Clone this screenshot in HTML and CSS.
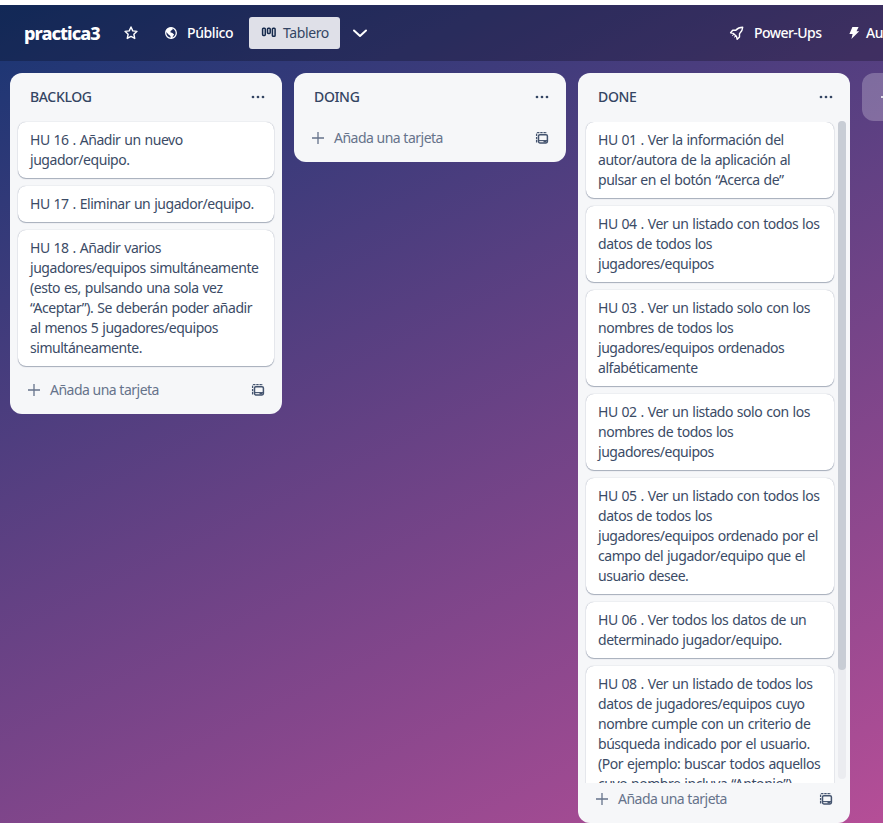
FILE: index.html
```html
<!DOCTYPE html>
<html lang="es">
<head>
<meta charset="utf-8">
<title>practica3</title>
<link rel="stylesheet" href="styles.css">
</head>
<body>
<svg width="0" height="0" class="defs">
  <symbol id="dots" viewBox="0 0 16 16"><g fill="currentColor"><circle cx="3" cy="8" r="1.35"/><circle cx="8" cy="8" r="1.35"/><circle cx="13" cy="8" r="1.35"/></g></symbol>
  <symbol id="plus" viewBox="0 0 16 16"><path d="M8 2v12M2 8h12" stroke="currentColor" stroke-width="1.3" fill="none"/></symbol>
  <symbol id="template" viewBox="0 0 16 16"><g fill="none" stroke="currentColor"><rect x="4.5" y="4.7" width="8.9" height="8.3" rx="1.4" stroke-width="1.5"/><path d="M4.5 10.6h8.5" stroke-width="1.1"/><path d="M9.5 11.5h3" stroke-width="1.8"/><path d="M2.6 12.5V3.9q0-1.3 1.3-1.3H13" stroke-width="1.3" stroke-dasharray="2.4 .8"/></g></symbol>
</svg>
<header class="bar">
  <h1 class="board-name">practica3</h1>
  <svg class="star" width="16" height="16" viewBox="0 0 16 16"><path d="M8 2l1.75 3.9 4.25.45-3.15 2.9.9 4.2L8 11.35l-3.75 2.1.9-4.2L2 6.35l4.25-.45z" fill="none" stroke="currentColor" stroke-width="1.4" stroke-linejoin="round"/></svg>
  <div class="item visibility">
    <svg width="14" height="14" viewBox="0 0 14 14"><circle cx="7" cy="7" r="5.3" fill="none" stroke="currentColor" stroke-width="1.3"/><path d="M1.5 5.2C2.4 3 4.3 1.5 7 1.4l1.8.4-.3 1.9-1.7 1.1-.5 1.5 2.1.8 1.7 1.5-1.2 1.6-.7 2.2-1.5.1-.3-2.5-1.9-1.5z" fill="currentColor"/></svg>
    <span>Público</span>
  </div>
  <div class="view">
    <svg width="16" height="14" viewBox="0 0 16 14"><g fill="none" stroke="currentColor" stroke-width="1.5"><rect x="1.6" y="2.2" width="2.7" height="7.2" rx=".8"/><rect x="6.5" y="2.2" width="2.7" height="5.2" rx=".8"/><rect x="11.4" y="2.2" width="2.7" height="8" rx=".8"/></g></svg>
    <span>Tablero</span>
  </div>
  <svg class="chevron" width="16" height="16" viewBox="0 0 16 16"><path d="M2 5.5l6 5.4 6-5.4" fill="none" stroke="currentColor" stroke-width="2" stroke-linecap="round" stroke-linejoin="round"/></svg>
  <div class="item powerups">
    <svg width="16" height="16" viewBox="0 0 16 16"><path d="M13.7 2.3c-3.3 0-5.2 1-6.9 3L3.7 5.2 1.6 7.7l2.8.7 3 2.9.8 3 2.3-2.4v-3.1c2-1.8 3.1-3.5 3.2-6.5z" fill="none" stroke="currentColor" stroke-width="1.4" stroke-linejoin="round"/><path d="M4.7 8.8l-1.2 2.1M7 11.2l-2 1" stroke="currentColor" stroke-width="1"/></svg>
    <span>Power-Ups</span>
  </div>
  <div class="item automation">
    <svg width="12" height="16" viewBox="0 0 12 16"><path d="M4.4 2h6.2L8.5 6.2h2.7L3.4 14l1.2-5H1.4z" fill="currentColor"/></svg>
    <span>Au</span>
  </div>
</header>
<main class="board">
  <section class="list">
    <div class="list-head"><h2>BACKLOG</h2><svg width="16" height="16"><use href="#dots"/></svg></div>
    <div class="cards">
      <article class="card">HU 16 . Añadir un nuevo<br>jugador/equipo.</article>
      <article class="card">HU 17 . Eliminar un jugador/equipo.</article>
      <article class="card">HU 18 . Añadir varios<br>jugadores/equipos simultáneamente<br>(esto es, pulsando una sola vez<br>“Aceptar”). Se deberán poder añadir<br>al menos 5 jugadores/equipos<br>simultáneamente.</article>
    </div>
    <div class="add"><svg width="16" height="16"><use href="#plus"/></svg><span>Añada una tarjeta</span><svg class="tpl" width="16" height="16"><use href="#template"/></svg></div>
  </section>
  <section class="list">
    <div class="list-head"><h2>DOING</h2><svg width="16" height="16"><use href="#dots"/></svg></div>
    <div class="add"><svg width="16" height="16"><use href="#plus"/></svg><span>Añada una tarjeta</span><svg class="tpl" width="16" height="16"><use href="#template"/></svg></div>
  </section>
  <section class="list full">
    <div class="list-head"><h2>DONE</h2><svg width="16" height="16"><use href="#dots"/></svg></div>
    <div class="cards">
      <article class="card">HU 01 . Ver la información del<br>autor/autora de la aplicación al<br>pulsar en el botón “Acerca de”</article>
      <article class="card">HU 04 . Ver un listado con todos los<br>datos de todos los<br>jugadores/equipos</article>
      <article class="card">HU 03 . Ver un listado solo con los<br>nombres de todos los<br>jugadores/equipos ordenados<br>alfabéticamente</article>
      <article class="card">HU 02 . Ver un listado solo con los<br>nombres de todos los<br>jugadores/equipos</article>
      <article class="card">HU 05 . Ver un listado con todos los<br>datos de todos los<br>jugadores/equipos ordenado por el<br>campo del jugador/equipo que el<br>usuario desee.</article>
      <article class="card">HU 06 . Ver todos los datos de un<br>determinado jugador/equipo.</article>
      <article class="card">HU 08 . Ver un listado de todos los<br>datos de jugadores/equipos cuyo<br>nombre cumple con un criterio de<br>búsqueda indicado por el usuario.<br>(Por ejemplo: buscar todos aquellos<br>cuyo nombre incluya “Antonio”)</article>
    </div>
    <div class="track"><div class="thumb"></div></div>
    <div class="add"><svg width="16" height="16"><use href="#plus"/></svg><span>Añada una tarjeta</span><svg class="tpl" width="16" height="16"><use href="#template"/></svg></div>
  </section>
  <div class="new-list"><svg width="16" height="16"><use href="#plus"/></svg></div>
</main>
</body>
</html>
```
FILE: styles.css
```css
* { box-sizing: border-box; }
body {
  margin: 0;
  height: 823px;
  overflow: hidden;
  display: flex;
  flex-direction: column;
  border-top: 5px solid #fff;
  background: linear-gradient(154deg, #173572 0%, #b54e97 100%);
  font: 14px/20px "Noto Sans", "Open Sans", sans-serif;
  color: #172b4d;
}
.defs { position: absolute; }
svg { flex: none; display: block; }
h1, h2 { margin: 0; }
.bar {
  height: 56px;
  flex: none;
  display: flex;
  align-items: center;
  padding-left: 24px;
  background: rgba(0, 0, 0, 0.24);
  color: #fff;
  white-space: nowrap;
}
.bar > * { flex: none; }
.board-name { font-size: 18px; line-height: 24px; font-weight: 800; width: 77px; letter-spacing: -0.95px; }
.star { margin-left: 22px; }
.item { display: flex; align-items: center; font-weight: 500; letter-spacing: -0.4px; }
.visibility { margin-left: 25px; width: 85px; gap: 9px; }
.view {
  width: 91px;
  height: 32px;
  padding-left: 12px;
  display: flex;
  align-items: center;
  gap: 6px;
  border-radius: 3px;
  background: #dfe0e8;
  color: #344563;
  letter-spacing: -0.4px;
}
.view svg { color: #172b4d; }
.chevron { margin-left: 12px; }
.powerups { margin-left: 361px; width: 119px; gap: 9px; letter-spacing: -0.55px; }
.automation { gap: 6px; }
.board {
  flex: 1;
  min-height: 0;
  display: flex;
  align-items: flex-start;
  gap: 12px;
  padding: 12px 0 0 10px;
}
.list {
  position: relative;
  flex: none;
  width: 272px;
  padding-bottom: 8px;
  border-radius: 12px;
  background: #f6f7f9;
}
.list-head {
  height: 49px;
  display: flex;
  align-items: center;
  justify-content: space-between;
  padding: 0 16px 1px 20px;
  color: #344563;
}
.list-head h2 { font-size: 14px; line-height: 20px; font-weight: 500; letter-spacing: -0.35px; }
.cards { display: flex; flex-direction: column; gap: 8px; padding: 0 8px 8px; }
.card {
  flex: none;
  padding: 8px 12px;
  border-radius: 8px;
  background: #fff;
  box-shadow: 0 1px 1px #091e4250, 0 0 1px #091e4260;
  letter-spacing: -0.46px;
  word-spacing: 0.7px;
  white-space: nowrap;
  color: #3b4b66;
}
.add {
  height: 32px;
  display: flex;
  align-items: center;
  gap: 8px;
  padding: 0 16px;
  color: #66738b;
  letter-spacing: -0.5px;
}
.tpl { margin-left: auto; color: #44546f; }
.full { height: 750px; display: flex; flex-direction: column; }
.full .list-head { flex: none; }
.full .cards { flex: 1; min-height: 0; overflow: hidden; padding: 0 16px 0 8px; }
.full .add { flex: none; }
.track {
  position: absolute;
  top: 48px;
  right: 4px;
  width: 8px;
  height: 658px;
  border-radius: 4px;
  background: #ebecf0;
}
.thumb { height: 549px; border-radius: 4px; background: #c8cdd5; }
.new-list {
  flex: 1;
  min-width: 0;
  overflow: hidden;
  height: 48px;
  padding: 16px 0 16px 17px;
  border-radius: 12px 0 0 12px;
  background: rgba(255, 255, 255, 0.24);
  color: #fff;
}
```
